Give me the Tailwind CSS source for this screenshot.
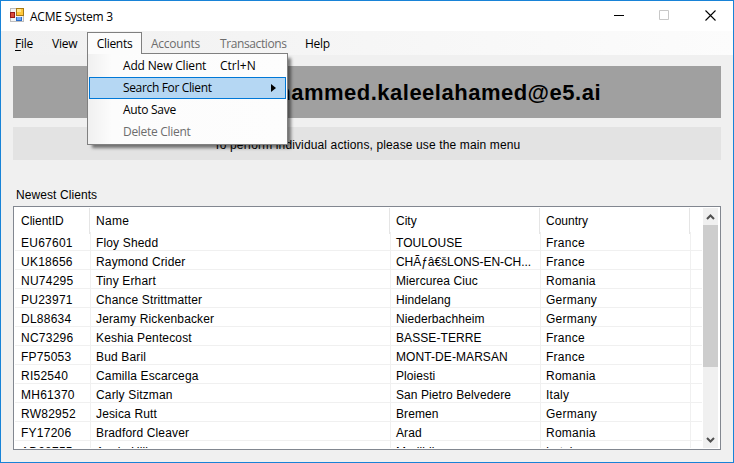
<!DOCTYPE html>
<html lang="en">
<head>
<meta charset="utf-8">
<title>ACME System 3</title>
<script src="https://cdn.jsdelivr.net/npm/@tailwindcss/browser@4"></script>
</head>
<body class="overflow-hidden">
<div class="relative w-[734px] h-[463px] border border-[#1883d7] bg-[#f0f0f0] text-black text-[12px] leading-[19px] font-['Liberation_Sans',sans-serif] flex flex-col whitespace-nowrap">
  <header class="h-[30px] shrink-0 bg-white flex items-center pl-[9px] font-['Open_Sans','Noto_Sans',sans-serif]">
    <svg class="mb-[2px]" width="14" height="14" viewBox="0 0 14 14" shape-rendering="crispEdges">
      <path d="M.5.5h13v13H.5z" fill="#f4f4f4" stroke="#bdbdbd"/>
      <path d="M6 0h8v8H6z" fill="#a87a13"/><path d="M7 1h6v6H7z" fill="#ffc83c"/><path d="M7 1h4v3H7z" fill="#ffe58d"/>
      <path d="M0 4h5v6H0z" fill="#961818"/><path d="M1 5h3v4H1z" fill="#d94b3a"/>
      <path d="M6 9h6v4H6z" fill="#2f6fc9"/><path d="M7 9h4v3H7z" fill="#72a9f3"/>
    </svg>
    <h1 class="ml-[6px] tracking-[-0.25px]">ACME System 3</h1>
    <div class="ml-auto mb-[2px] flex items-center mr-[17px]">
      <svg class="mr-[35px]" width="10" height="10"><path d="M0 5.5h10" stroke="#000"/></svg>
      <svg class="mr-[36px]" width="10" height="10"><path d="M.5.5h9v9h-9z" fill="none" stroke="#c8c8c8"/></svg>
      <svg width="11" height="11" viewBox="0 0 11 11"><path d="M.5.5l10 10M10.5.5l-10 10" stroke="#000" stroke-width="1.1"/></svg>
    </div>
  </header>
  <nav class="h-[24px] shrink-0 bg-linear-to-r from-[#f0f0f0] to-[#fcfcfc] flex items-center pl-[14px] font-['Open_Sans','Noto_Sans',sans-serif] tracking-[-0.25px]">
    <span class="w-[37px]"><u class="underline-offset-2">F</u>ile</span>
    <span class="w-[44px]">View</span>
    <span class="w-[55px]"></span>
    <span class="w-[69px] text-[#6d6d6d]">Accounts</span>
    <span class="w-[85px] text-[#6d6d6d] tracking-[-0.4px]">Transactions</span>
    <span>Help</span>
  </nav>
  <main class="flex flex-col px-[12px]">
    <div class="mt-[11px] h-[52px] bg-[#a0a0a0] flex items-center justify-end pr-[120px] text-[22px] tracking-[0.5px] font-bold">mohammed.kaleelahamed@e5.ai</div>
    <div class="mt-[9px] h-[33px] bg-[#e3e3e3] flex items-center justify-center pt-[3px] tracking-[0.13px]">To perform individual actions, please use the main menu</div>
    <h2 class="mt-[26px] h-[20px] pl-[3px] tracking-[0.08px]">Newest Clients</h2>
    <section class="h-[244px] border border-[#828790] bg-white p-px pr-[2px] flex">
      <div class="w-[687px] overflow-hidden" id="table">
        <div class="h-[24px] grid grid-cols-[75px_300px_150px_150px_12px] leading-[26px]">
          <span class="border-r border-[#e5e5e5] pl-[6px]">ClientID</span>
          <span class="border-r border-[#e5e5e5] pl-[6px] tracking-[0.3px]">Name</span>
          <span class="border-r border-[#e5e5e5] pl-[6px]">City</span>
          <span class="border-r border-[#e5e5e5] pl-[6px]">Country</span>
        </div>
      </div>
      <div class="ml-px w-[15px] bg-[#f0f0f0] flex flex-col items-center">
        <svg class="shrink-0" width="15" height="17"><path d="M4 11l3.5-3.5L11 11" fill="none" stroke="#505050" stroke-width="2"/></svg>
        <div class="w-full h-[142px] bg-[#cdcdcd]"></div>
        <svg class="mt-auto shrink-0" width="15" height="17"><path d="M4 7l3.5 3.5L11 7" fill="none" stroke="#505050" stroke-width="2"/></svg>
      </div>
    </section>
  </main>
  <div class="absolute left-[86px] top-[31px] font-['Open_Sans','Noto_Sans',sans-serif] tracking-[-0.3px]">
    <div class="relative z-10 w-[55px] h-[22px] border border-b-0 border-[#808080] bg-[#fcfcfc] text-center leading-[21px]">Clients</div>
    <div class="-mt-px w-[201px] h-[92px] border border-[#808080] bg-[#fdfdfd] bg-linear-to-r from-[#f0f0f0] from-0% via-[#fcfcfc] via-12% to-[#fdfdfd] p-px leading-[22px] shadow-[4px_4px_3px_-1px_rgba(0,0,0,0.5)]">
      <div class="h-[22px] pl-[34px] flex"><span class="w-[97px] tracking-[-0.17px]">Add New Client</span><span class="tracking-[0px]">Ctrl+N</span></div>
      <div class="h-[22px] pl-[33px] border border-[#0078d7] bg-[#b5d7f3] flex items-center justify-between pr-[9px] tracking-[-0.35px]">Search For Client<svg width="5" height="8"><path d="M0 0l5 4-5 4z"/></svg></div>
      <div class="h-[22px] pl-[34px]">Auto Save</div>
      <div class="h-[22px] pl-[34px] text-[#6d6d6d]">Delete Client</div>
    </div>
  </div>
</div>
<script>
const clients = [
  ["EU67601","Floy Shedd","TOULOUSE","France"],
  ["UK18656","Raymond Crider","CHÃƒâ€šLONS-EN-CH...","France"],
  ["NU74295","Tiny Erhart","Miercurea Ciuc","Romania"],
  ["PU23971","Chance Strittmatter","Hindelang","Germany"],
  ["DL88634","Jeramy Rickenbacker","Niederbachheim","Germany"],
  ["NC73296","Keshia Pentecost","BASSE-TERRE","France"],
  ["FP75053","Bud Baril","MONT-DE-MARSAN","France"],
  ["RI52540","Camilla Escarcega","Ploiesti","Romania"],
  ["MH61370","Carly Sitzman","San Pietro Belvedere","Italy"],
  ["RW82952","Jesica Rutt","Bremen","Germany"],
  ["FY17206","Bradford Cleaver","Arad","Romania"],
  ["AD28755","Annie Hill","Medjidia","Latvia"]
];
const cell = ["pl-[6px] tracking-[0.25px]", "pl-[5px] tracking-[0.15px]", "pl-[5px] tracking-[0.08px]", "pl-[5px] tracking-[0.25px]"];
document.getElementById("table").insertAdjacentHTML("beforeend", clients.map(r =>
  `<div class="h-[19px] border-b border-[#f0f0f0] grid grid-cols-[76px_300px_150px_150px_11px] leading-[22px]">` +
  r.map((c, i) => `<span class="h-[19px] border-r border-[#f0f0f0] ${c.endsWith("...") ? "pl-[5px] tracking-[-0.05px]" : cell[i]}">${c}</span>`).join("") + `</div>`).join(""));
</script>
</body>
</html>
